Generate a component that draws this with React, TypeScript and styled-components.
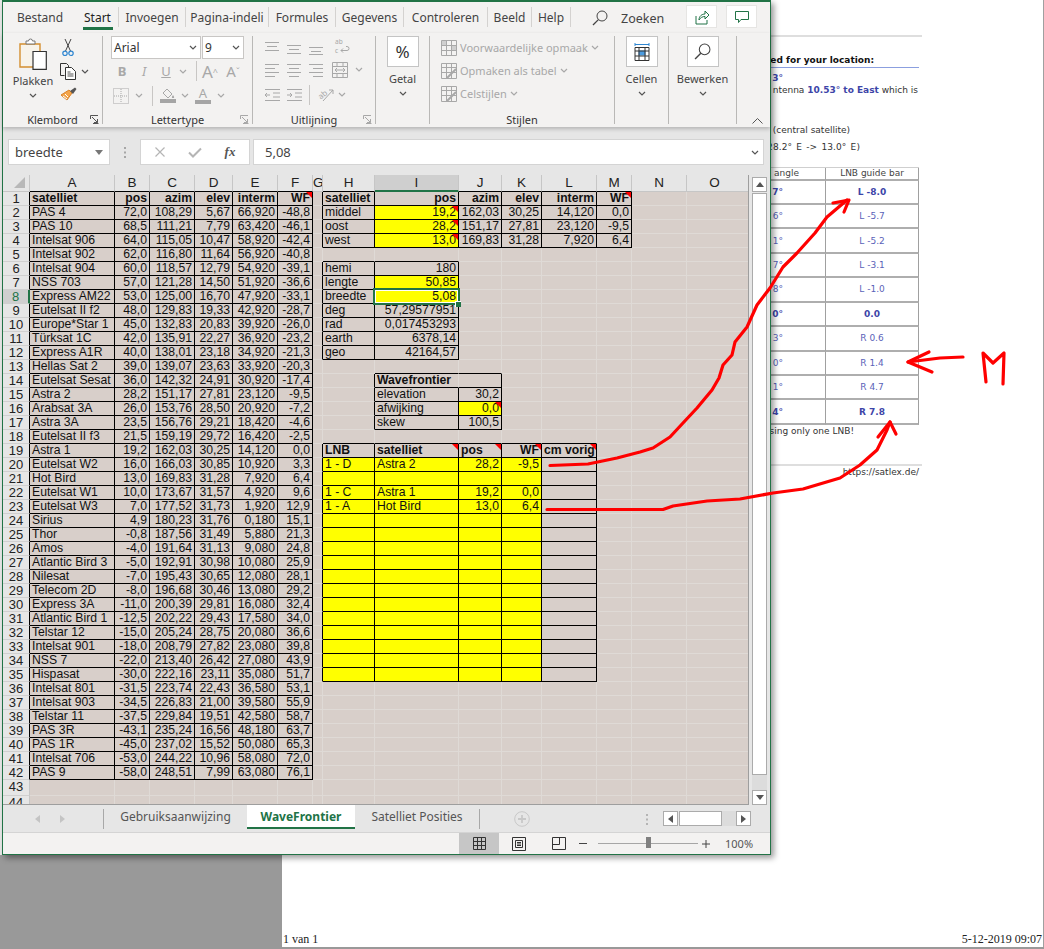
import React from "react";
import styled, { createGlobalStyle } from "styled-components";

const UI = `"Noto Sans", "Open Sans", sans-serif`;
const GREEN = "#217346";
const OFF = "#a8a8a8";
const INK = "#444444";

const Global = createGlobalStyle`
  html, body { margin: 0; padding: 0; width: 1044px; height: 949px; overflow: hidden; background: #999999; }
  * { box-sizing: border-box; }
`;

const Desktop = styled.div`
  position: relative;
  width: 1044px;
  height: 949px;
  overflow: hidden;
  padding-left: 282px;
  background: #999999;
`;

/* ---------- printed page behind the window ---------- */
const Page = styled.div`
  width: 762px;
  height: 947px;
  background: #ffffff;
  border-right: 1px solid #a0a0a0;
  display: flex;
  flex-direction: column;
  padding-top: 35px;
  font-family: "DejaVu Sans", sans-serif;
  font-size: 9px;
  color: #333333;
`;
const Doc = styled.div`
  width: 637px;
  display: flex;
  flex-direction: column;
`;
const Rule = styled.div<{ $top?: number }>`
  height: 2px;
  margin-top: ${(p) => p.$top ?? 0}px;
  margin-right: -3px;
  background: #dedede;
`;
const Line = styled.div<{ $top?: number; $end?: number }>`
  height: 12px;
  line-height: 12px;
  margin-top: ${(p) => p.$top ?? 0}px;
  padding-right: ${(p) => p.$end ?? 0}px;
  text-align: right;
  white-space: nowrap;
`;
const HeadLine = styled(Line)`
  height: 14px;
  font-weight: 700;
  color: #111111;
  border-bottom: 1px solid #8b9fdf;
`;
const WideLine = styled(Line)`
  word-spacing: 1.2px;
  letter-spacing: 0.1px;
`;
const Blue = styled.b`
  color: #3d45a8;
`;
const GuideTable = styled.div`
  margin-top: 14px;
  display: grid;
  grid-template-columns: 125px 93px;
  grid-template-rows: 12.5px repeat(10, 24.45px);
  margin-left: auto;
  border-top: 1px solid #cfcfcf;
`;
const GuideCell = styled.div<{ $bold?: boolean; $head?: boolean; $pad?: number }>`
  display: flex;
  align-items: center;
  justify-content: ${(p) => (p.$pad ? "flex-end" : "center")};
  padding-right: ${(p) => p.$pad ?? 0}px;
  border-bottom: 2px solid #aeaeae;
  border-right: 1px solid #a0a0a0;
  font-size: 9px;
  font-weight: ${(p) => (p.$bold ? 700 : 400)};
  color: ${(p) => (p.$head ? "#444444" : p.$bold ? "#3d45a8" : "#5a62b8")};
  white-space: nowrap;
`;
const PrintFoot = styled.div`
  margin-top: auto;
  display: flex;
  justify-content: space-between;
  height: 14px;
  line-height: 13px;
  padding: 0 1px;
  font-family: "Liberation Serif", serif;
  font-size: 12px;
  color: #222222;
`;

/* ---------- window ---------- */
const Win = styled.div`
  position: absolute;
  left: 2px;
  top: 0;
  width: 769px;
  height: 855px;
  display: flex;
  flex-direction: column;
  background: #e6e6e6;
  border: 1px solid ${GREEN};
  border-top-width: 2px;
  box-shadow: 3px 3px 6px rgba(0, 0, 0, 0.4), -2px 0 0 #e9e9e9;
  font-family: ${UI};
  z-index: 1;
`;
const TabRow = styled.div`
  height: 31px;
  flex: none;
  display: flex;
  align-items: flex-start;
  background: #f3f2f1;
  padding-top: 5px;
`;
const Tab = styled.div<{ $w: number; $on?: boolean; $bar?: boolean }>`
  position: relative;
  width: ${(p) => p.$w}px;
  height: 20px;
  flex: none;
  text-align: center;
  line-height: 21px;
  font-size: 12px;
  color: ${(p) => (p.$on ? "#222222" : INK)};
  border-right: ${(p) => (p.$bar ? "1px solid #d4d2d0" : "none")};
  white-space: nowrap;
`;
const TabMark = styled.span`
  position: absolute;
  left: 50%;
  top: 20px;
  width: 30px;
  margin-left: -15px;
  height: 3px;
  background: ${GREEN};
`;
const SearchBox = styled.div`
  display: flex;
  align-items: center;
  gap: 13px;
  margin-left: 21px;
  height: 22px;
  font-size: 12.5px;
  color: ${INK};
  width: 85px;
`;
const TitleBtn = styled.div`
  width: 31px;
  height: 23px;
  margin-left: 9px;
  margin-top: -2px;
  flex: none;
  background: #ffffff;
  border: 1px solid #e6e5e3;
  display: flex;
  align-items: center;
  justify-content: center;
`;

const Ribbon = styled.div`
  height: 94px;
  flex: none;
  position: relative;
  z-index: 2;
  display: flex;
  padding-top: 3px;
  background: #f3f2f1;
  box-shadow: 0 2px 4px rgba(0, 0, 0, 0.22);
`;
const Group = styled.div<{ $w: number }>`
  position: relative;
  width: ${(p) => p.$w}px;
  height: 88px;
  flex: none;
  border-right: 1px solid #b9b8b6;
  display: flex;
  flex-direction: column;
`;
const GroupBody = styled.div<{ $pad?: number }>`
  flex: 1;
  min-height: 0;
  padding-left: ${(p) => p.$pad ?? 0}px;
  display: flex;
`;
const GroupName = styled.div`
  height: 14px;
  margin-bottom: -3px;
  flex: none;
  line-height: 14px;
  text-align: center;
  font-size: 11px;
  color: #333333;
`;
const Launcher = styled.span`
  position: absolute;
  right: 3px;
  bottom: 0;
  line-height: 0;
`;
const BigCol = styled.div<{ $w?: number }>`
  width: ${(p) => (p.$w ? `${p.$w}px` : "100%")};
  flex: none;
  display: flex;
  flex-direction: column;
  align-items: center;
  font-size: 11px;
  color: ${INK};
  white-space: nowrap;
`;
const PasteArt = styled.div`
  height: 36px;
  padding-top: 2px;
  line-height: 0;
`;
const BigLabel = styled.div`
  height: 17px;
  line-height: 17px;
`;
const BigChev = styled.div`
  height: 12px;
  display: flex;
  align-items: center;
`;
const BigBtn = styled.div`
  width: 32px;
  height: 31px;
  margin-bottom: 3px;
  background: #ffffff;
  border: 1px solid #c4c4c4;
  display: flex;
  align-items: center;
  justify-content: center;
  font-size: 17px;
  color: #333333;
`;
const Stack = styled.div`
  display: flex;
  flex-direction: column;
`;
const ClipRow = styled.div`
  height: 23.5px;
  display: flex;
  align-items: center;
`;
const Slot = styled.span<{ $w: number }>`
  width: ${(p) => p.$w}px;
  flex: none;
  display: flex;
  align-items: center;
  justify-content: center;
  height: 100%;
  line-height: 0;
  svg {
    flex: none;
  }
`;
const ToolRow = styled.div<{ $h: number }>`
  height: ${(p) => p.$h}px;
  display: flex;
  align-items: center;
  flex: none;
`;
const Divider = styled.span<{ $l?: number; $r?: number }>`
  width: 1px;
  height: 20px;
  flex: none;
  margin-left: ${(p) => p.$l ?? 0}px;
  margin-right: ${(p) => p.$r ?? 0}px;
  background: #c8c6c4;
`;
const FontField = styled.div<{ $w: number }>`
  width: ${(p) => p.$w}px;
  height: 23px;
  margin-right: 1px;
  flex: none;
  background: #ffffff;
  border: 1px solid #c8c6c4;
  display: flex;
  align-items: center;
  justify-content: space-between;
  padding: 0 3px 0 2px;
  font-family: "Noto Sans", sans-serif;
  font-size: 12px;
  color: #333333;
`;
const Glyph = styled.span<{ $size?: number; $bold?: boolean; $italic?: boolean; $under?: boolean; $serif?: boolean }>`
  font-family: ${(p) => (p.$serif ? `"Liberation Serif", serif` : `"Noto Sans", sans-serif`)};
  font-size: ${(p) => p.$size ?? 13}px;
  line-height: 1;
  font-weight: ${(p) => (p.$bold ? 700 : 400)};
  font-style: ${(p) => (p.$italic ? "italic" : "normal")};
  text-decoration: ${(p) => (p.$under ? "underline" : "none")};
  color: ${OFF};
`;
const ColorA = styled.span`
  display: flex;
  flex-direction: column;
  align-items: center;
  line-height: 1;
  font-size: 13px;
  color: ${OFF};
`;
const ColorBar = styled.span`
  display: block;
  width: 16px;
  height: 4px;
  margin-top: 0;
  background: #a5a5a5;
`;
const StyleRow = styled.div`
  height: 23px;
  display: flex;
  align-items: center;
  gap: 3px;
  font-size: 11px;
  color: ${OFF};
  white-space: nowrap;
`;
const Collapse = styled.div`
  flex: 1;
  position: relative;
`;
const CollapseCaret = styled.span`
  position: absolute;
  right: 7px;
  bottom: 3px;
  line-height: 0;
`;

/* ---------- formula bar ---------- */
const FormulaBar = styled.div`
  height: 48px;
  flex: none;
  display: flex;
  align-items: flex-start;
  padding: 12px 0 0 5px;
  background: #e6e6e6;
`;
const NameBox = styled.div`
  width: 102px;
  height: 26px;
  flex: none;
  background: #ffffff;
  border: 1px solid #d4d4d4;
  display: flex;
  align-items: center;
  justify-content: space-between;
  padding: 0 6px 0 6px;
  font-size: 13px;
  color: ${INK};
`;
const Grip = styled.div`
  width: 30px;
  height: 26px;
  flex: none;
  display: flex;
  align-items: center;
  justify-content: center;
`;
const FxBox = styled.div`
  width: 110px;
  height: 26px;
  flex: none;
  background: #ffffff;
  border: 1px solid #d4d4d4;
  display: flex;
  align-items: center;
  justify-content: space-around;
  padding: 0 2px;
`;
const FxText = styled.span`
  font-family: "Liberation Serif", serif;
  font-style: italic;
  font-weight: 700;
  font-size: 13px;
  color: #555555;
`;
const ValueBox = styled.div`
  width: 511px;
  height: 26px;
  margin-left: 3px;
  flex: none;
  background: #ffffff;
  border: 1px solid #d4d4d4;
  display: flex;
  align-items: center;
  justify-content: space-between;
  padding: 0 4px 0 11px;
  font-size: 13px;
  color: ${INK};
`;

/* ---------- sheet ---------- */
const SheetWrap = styled.div`
  height: 630px;
  flex: none;
  display: flex;
`;
const Grid = styled.div`
  width: 746px;
  height: 630px;
  flex: none;
  overflow: hidden;
  display: grid;
  grid-template-columns: 27px 85px 35px 45px 38px 45px 35px 10px 52px 84px 43px 40px 55px 35px 55px 62px;
  grid-template-rows: 17px repeat(42, 14px) 16px 14px;
  background: #d8cfca;
  border-bottom: 1px solid #9e9e9e;
  border-right: 1px solid #9e9e9e;
  font-family: "Liberation Sans", Arial, sans-serif;
  font-size: 12.2px;
  color: #111111;
`;
const Corner = styled.div`
  background: #e6e6e6;
  border-right: 1px solid #c6c6c6;
  border-bottom: 1px solid #c6c6c6;
  display: flex;
  align-items: flex-end;
  justify-content: flex-end;
  padding: 0 4px 3px 0;
`;
const ColHead = styled.div<{ $on?: boolean; $dark?: boolean; $pad?: number }>`
  background: ${(p) => (p.$on ? "#cfcfcf" : "#e6e6e6")};
  border-right: 1px solid #c6c6c6;
  border-bottom: ${(p) => (p.$on ? `2px solid ${GREEN}` : p.$dark ? "1px solid #000" : "1px solid #c6c6c6")};
  font-size: 13.5px;
  line-height: 15px;
  text-align: center;
  padding-right: ${(p) => p.$pad ?? 0}px;
  color: #222222;
  overflow: hidden;
`;
const RowHead = styled.div<{ $on?: boolean; $dark?: boolean }>`
  background: ${(p) => (p.$on ? "#cfcfcf" : "#e6e6e6")};
  border-bottom: 1px solid ${(p) => (p.$on ? "#cfcfcf" : "#d0d0d0")};
  border-right: ${(p) => (p.$on ? `2px solid ${GREEN}` : p.$dark ? "1px solid #000" : "1px solid #c6c6c6")};
  font-size: 13px;
  line-height: 13px;
  text-align: center;
  color: ${(p) => (p.$on ? GREEN : "#222222")};
`;
const Cell = styled.div<{ $right?: boolean; $bold?: boolean; $fill?: boolean; $edgeR?: boolean; $edgeB?: boolean; $z?: boolean }>`
  position: relative;
  z-index: ${(p) => (p.$z ? 3 : "auto")};
  min-width: 0;
  background: ${(p) => (p.$fill ? "#ffff00" : "transparent")};
  border-right: 1px solid ${(p) => (p.$edgeR ? "#000000" : "#dfdad6")};
  border-bottom: 1px solid ${(p) => (p.$edgeB ? "#000000" : "#dfdad6")};
  padding: 0 2px;
  text-align: ${(p) => (p.$right ? "right" : "left")};
  font-weight: ${(p) => (p.$bold ? 700 : 400)};
  line-height: 13px;
  white-space: nowrap;
`;
const Note = styled.span`
  position: absolute;
  top: 0;
  right: 0;
  width: 0;
  height: 0;
  border-top: 6px solid #ff0000;
  border-left: 6px solid transparent;
`;
const Cursor = styled.span`
  position: absolute;
  left: -2px;
  top: -2px;
  right: -2px;
  bottom: -2px;
  border: 2px solid ${GREEN};
  box-shadow: inset 0 0 0 1px #ffffff;
  pointer-events: none;
`;
const Handle = styled.span`
  position: absolute;
  right: -3px;
  bottom: -4px;
  width: 6px;
  height: 6px;
  background: ${GREEN};
  border: 1px solid #ffffff;
  border-width: 1px 0 0 1px;
`;
const VScroll = styled.div`
  width: 21px;
  height: 630px;
  flex: none;
  display: flex;
  flex-direction: column;
  padding: 2px 2px 0 3px;
  background: #e6e6e6;
`;
const ArrowBtn = styled.div`
  width: 15px;
  height: 15px;
  flex: none;
  background: #ffffff;
  border: 1px solid #ababab;
  display: flex;
  align-items: center;
  justify-content: center;
  line-height: 0;
`;
const VThumb = styled.div`
  width: 15px;
  height: 582px;
  margin-top: 1px;
  flex: none;
  background: #ffffff;
  border: 1px solid #ababab;
`;
const VTrack = styled.div`
  width: 15px;
  flex: 1;
  background: #dcdcdc;
`;

/* ---------- sheet tabs ---------- */
const SheetBar = styled.div`
  height: 27px;
  flex: none;
  display: flex;
  align-items: flex-start;
  background: #e6e6e6;
  font-size: 12px;
  color: #555555;
`;
const NavArrows = styled.div`
  width: 100px;
  height: 20px;
  margin-top: 4px;
  flex: none;
  display: flex;
  align-items: center;
  justify-content: center;
  gap: 20px;
  padding-right: 6px;
`;
const BarSep = styled.span`
  width: 1px;
  height: 20px;
  margin-top: 4px;
  flex: none;
  background: #a8a8a8;
`;
const SheetTab = styled.div<{ $w: number; $on?: boolean }>`
  width: ${(p) => p.$w}px;
  height: 24px;
  flex: none;
  text-align: center;
  line-height: 23px;
  white-space: nowrap;
  font-weight: ${(p) => (p.$on ? 700 : 400)};
  color: ${(p) => (p.$on ? GREEN : "#555555")};
  background: ${(p) => (p.$on ? "#ffffff" : "transparent")};
  border-bottom: ${(p) => (p.$on ? `2px solid ${GREEN}` : "none")};
`;
const AddSheet = styled.div`
  width: 84px;
  height: 28px;
  flex: none;
  display: flex;
  align-items: center;
  justify-content: center;
`;
const Dots = styled.div`
  width: 39px;
  margin-left: 60px;
  height: 28px;
  flex: none;
  display: flex;
  align-items: center;
  justify-content: center;
  padding-left: 6px;
`;
const HScroll = styled.div`
  display: flex;
  flex: none;
  margin-top: 6px;
  margin-left: 0;
`;
const HThumb = styled.div`
  width: 43px;
  height: 15px;
  margin-left: 1px;
  background: #ffffff;
  border: 1px solid #ababab;
`;
const HTrack = styled.div`
  width: 14px;
  height: 15px;
  background: #dcdcdc;
`;

/* ---------- status bar ---------- */
const StatusBar = styled.div`
  height: 22px;
  flex: none;
  display: flex;
  align-items: center;
  justify-content: flex-end;
  background: #f3f2f1;
  border-top: 1px solid #d4d4d4;
  padding-right: 20px;
  font-size: 11px;
  color: #555555;
`;
const ViewBtn = styled.div<{ $on?: boolean }>`
  width: 40px;
  height: 21px;
  flex: none;
  display: flex;
  align-items: center;
  justify-content: center;
  background: ${(p) => (p.$on ? "#c6c6c6" : "transparent")};
`;
const ZoomTrack = styled.div`
  position: relative;
  width: 100px;
  height: 1px;
  margin: 0 4px 0 11px;
  flex: none;
  background: #a6a6a6;
`;
const ZoomKnob = styled.span`
  position: absolute;
  left: 48px;
  top: -6px;
  width: 5px;
  height: 11px;
  background: #808080;
`;
const ZoomPct = styled.span`
  width: 40px;
  margin-left: 15px;
  margin-right: -15px;
  flex: none;
`;
const Ink = styled.svg`
  position: absolute;
  left: 0;
  top: 0;
  z-index: 5;
  pointer-events: none;
`;

/* ---------- little drawings ---------- */
const Chev = ({ off }: { off?: boolean }) => (
  <svg width="8" height="5" viewBox="0 0 8 5">
    <path d="M1 1l3 3 3-3" fill="none" stroke={off ? OFF : "#555"} strokeWidth="1.2" />
  </svg>
);
const Launch = ({ off }: { off?: boolean }) => (
  <svg width="9" height="9" viewBox="0 0 9 9">
    <path d="M.5 4V.5H8M8.5 8.5H3M2 2l5.5 5.5M7.5 4v3.5H4" fill="none" stroke={off ? OFF : "#555"} strokeWidth="1" />
  </svg>
);
const Bars = ({ rows, w = 16 }: { rows: number[][]; w?: number }) => (
  <svg width={w} height="16" viewBox={`0 0 ${w} 16`}>
    {rows.map(([a, b, y], i) => (
      <path key={i} d={`M${a} ${y + 0.5}H${b}`} stroke={OFF} strokeWidth="1" />
    ))}
  </svg>
);
const Paste = () => (
  <svg width="28" height="33" viewBox="0 0 28 33">
    <path d="M1 6h20v23H1z" fill="#f7f3ea" stroke="#d48f2f" strokeWidth="1.4" />
    <path d="M7 5V3h2.5a2 2 0 0 1 4 0H16v3H7z" fill="#fff" stroke="#777" />
    <path d="M14 13.5h13.3v17.8H14z" fill="#fff" stroke="#333" strokeWidth="1.2" />
  </svg>
);
const Scissors = () => (
  <svg width="12" height="18" viewBox="0 0 12 18">
    <path d="M3 0l5.5 12M9 0L3.5 12" stroke="#444" strokeWidth="1" fill="none" />
    <circle cx="3" cy="14.3" r="2.2" fill="none" stroke="#2e86d1" strokeWidth="1.2" />
    <circle cx="9" cy="14.3" r="2.2" fill="none" stroke="#2e86d1" strokeWidth="1.2" />
  </svg>
);
const Copy = () => (
  <svg width="17" height="17" viewBox="0 0 17 17">
    <path d="M.5.5h6l2 2v3M.5.5v12h4" fill="none" stroke="#333" />
    <path d="M5.5 4.5h6l4 4v8h-10z" fill="#fff" stroke="#333" />
    <path d="M7.5 9h3M7.5 11h6M7.5 13h6" stroke="#555" />
  </svg>
);
const Brush = () => (
  <svg width="17" height="15" viewBox="0 0 17 15">
    <path d="M9 3l3 3-5 7-6-5z" fill="#f3a44a" stroke="#d9822b" />
    <path d="M10 4l5-3.5 1.5 1.5-3.5 5z" fill="#555" />
    <path d="M3 9l4 3M5 7l3 3" stroke="#fff" />
  </svg>
);
const CellBorders = () => (
  <svg width="16" height="16" viewBox="0 0 16 16">
    <path d="M.5.5h15v15H.5z" fill="none" stroke={OFF} strokeDasharray="1 1" />
    <path d="M8 1v14M1 8h14" stroke={OFF} strokeDasharray="1 1" />
  </svg>
);
const Bucket = () => (
  <svg width="16" height="11" viewBox="0 0 16 11">
    <path d="M7 1l5 5-4 4-5-5z" fill="none" stroke={OFF} />
    <path d="M13 7c1 1.5 1.5 2 1 3h-2c-.4-1 .3-1.8 1-3z" fill={OFF} />
  </svg>
);
const Wrap = () => (
  <svg width="16" height="17" viewBox="0 0 16 17" overflow="visible">
    <text fontSize="6.5" fill={OFF} fontFamily="Noto Sans">
      <tspan x="1" y="5.5">ab</tspan>
      <tspan x="1" y="14.5">c</tspan>
    </text>
    <path d="M7 12.5h6a2 2 0 0 0 0-4h-1M7 12.5l2-2M7 12.5l2 2" fill="none" stroke={OFF} />
  </svg>
);
const Merge = () => (
  <svg width="16" height="16" viewBox="0 0 16 16">
    <path d="M.5.5h15v15H.5zM.5 4.5h15M.5 11.5h15M5 1v3M11 1v3M5 12v3M11 12v3" fill="none" stroke={OFF} />
    <path d="M3 8h10M3 8l2-2M3 8l2 2M13 8l-2-2M13 8l-2 2" fill="none" stroke={OFF} />
  </svg>
);
const Indent = ({ flip }: { flip?: boolean }) => (
  <svg width="15" height="14" viewBox="0 0 15 14">
    <path d="M0 1.5h15M0 12.5h15M8 5h7M8 9h7" stroke={OFF} />
    <path d={flip ? "M5 7H0M5 7L3 5M5 7L3 9" : "M0 7h5M0 7l2-2M0 7l2 2"} fill="none" stroke={OFF} />
  </svg>
);
const Orient = () => (
  <svg width="18" height="17" viewBox="0 0 18 17" overflow="visible">
    <text x="1" y="12" fontSize="8" fill={OFF} fontFamily="Noto Sans" transform="rotate(-40 5 9)">ab</text>
    <path d="M6 15L16 4M16 4h-4M16 4v4" fill="none" stroke={OFF} />
  </svg>
);
const Percent = () => <span>%</span>;
const Cells = () => (
  <svg width="16" height="19" viewBox="0 0 16 19">
    <path d="M1 1v3M15 1v3M1 2.5h14" stroke="#2e86d1" fill="none" />
    <path d="M1 5.5h14v13H1z" fill="none" stroke="#333" />
    <path d="M4.5 8.5h7v5h-7z" fill="#4a9be0" />
    <path d="M1 9h14M1 14h14M5 6v12M11 6v12" stroke="#333" />
  </svg>
);
const Lens = ({ s = 16, c = "#444" }: { s?: number; c?: string }) => (
  <svg width={s} height={s} viewBox="0 0 16 16">
    <circle cx="10" cy="6" r="5" fill="none" stroke={c} />
    <path d="M6.4 9.6L1 15" stroke={c} strokeWidth="1.3" />
  </svg>
);
const CondFmt = () => (
  <svg width="16" height="16" viewBox="0 0 16 16">
    <path d="M.5.5h15v15H.5zM.5 5.5h15M.5 10.5h15M5.5 1v14M10.5 1v14" fill="none" stroke={OFF} />
    <path d="M1 1h4v4H1zM11 6h4v4h-4z" fill="#cfcfcf" />
  </svg>
);
const TableFmt = () => (
  <svg width="16" height="16" viewBox="0 0 16 16">
    <path d="M.5.5h15v15H.5zM.5 4.5h15M.5 9.5h15M5.5 1v14M10.5 1v14" fill="none" stroke={OFF} />
    <path d="M6 15l9-9" stroke={OFF} strokeWidth="2" />
  </svg>
);
const Share = () => (
  <svg width="16" height="16" viewBox="0 0 16 16">
    <path d="M2 7v8h11v-4" fill="none" stroke={GREEN} />
    <path d="M5 11c0-4 3-6 6-6V2l4 4-4 4V7.500c-2.500 0-4.500 1-6 3.500z" fill="none" stroke={GREEN} />
  </svg>
);
const Comment = () => (
  <svg width="14" height="14" viewBox="0 0 14 14">
    <path d="M.5 1.500h13v8H6l-2.500 3V9.500h-3z" fill="none" stroke={GREEN} />
  </svg>
);
const X = () => (
  <svg width="10" height="10" viewBox="0 0 10 10">
    <path d="M.5.5l9 9M9.500.5l-9 9" stroke="#b5b5b5" strokeWidth="1.200" />
  </svg>
);
const Check = () => (
  <svg width="14" height="11" viewBox="0 0 14 11">
    <path d="M1 5.500l4 4 8-8" fill="none" stroke="#b5b5b5" strokeWidth="2" />
  </svg>
);
const GripDots = ({ c = "#a6a6a6" }: { c?: string }) => (
  <svg width="2" height="11" viewBox="0 0 2 11">
    <path d="M0 0h2v2H0zM0 4.500h2v2H0zM0 9h2v2H0z" fill={c} />
  </svg>
);
const Tri = ({ dir, c = "#555" }: { dir: "u" | "d" | "l" | "r"; c?: string }) => {
  const d = { u: "M0 5L4 0l4 5z", d: "M0 0l4 5 4-5z", l: "M5 0v8L0 4z", r: "M0 0v8l5-4z" }[dir];
  const v = dir === "u" || dir === "d";
  return (
    <svg width={v ? 8 : 5} height={v ? 5 : 8} viewBox={v ? "0 0 8 5" : "0 0 5 8"}>
      <path d={d} fill={c} />
    </svg>
  );
};
const Normal = () => (
  <svg width="13" height="13" viewBox="0 0 13 13">
    <path d="M.5.5h12v12H.5zM.5 4.500h12M.5 8.500h12M4.500 1v12M8.500 1v12" fill="none" stroke="#333" />
  </svg>
);
const Layout = () => (
  <svg width="14" height="14" viewBox="0 0 14 14">
    <path d="M.5.5h13v13H.5zM3.500 3.500h7v7h-7zM5 5.500h4M5 7h4M5 8.500h4" fill="none" stroke="#333" />
  </svg>
);
const Breaks = () => (
  <svg width="14" height="13" viewBox="0 0 14 13">
    <path d="M.5.5h13v12H.5zM.5 7.500h7M7.500 1v6.500" fill="none" stroke="#333" />
  </svg>
);

/* ---------- sheet data ---------- */
const COLS = ["", "A", "B", "C", "D", "E", "F", "G", "H", "I", "J", "K", "L", "M", "N", "O"];
const SATS = `PAS 4|72,0|108,29|5,67|66,920|-48,8
PAS 10|68,5|111,21|7,79|63,420|-46,1
Intelsat 906|64,0|115,05|10,47|58,920|-42,4
Intelsat 902|62,0|116,80|11,64|56,920|-40,8
Intelsat 904|60,0|118,57|12,79|54,920|-39,1
NSS 703|57,0|121,28|14,50|51,920|-36,6
Express AM22|53,0|125,00|16,70|47,920|-33,1
Eutelsat II f2|48,0|129,83|19,33|42,920|-28,7
Europe*Star 1|45,0|132,83|20,83|39,920|-26,0
Türksat 1C|42,0|135,91|22,27|36,920|-23,2
Express A1R|40,0|138,01|23,18|34,920|-21,3
Hellas Sat 2|39,0|139,07|23,63|33,920|-20,3
Eutelsat Sesat|36,0|142,32|24,91|30,920|-17,4
Astra 2|28,2|151,17|27,81|23,120|-9,5
Arabsat 3A|26,0|153,76|28,50|20,920|-7,2
Astra 3A|23,5|156,76|29,21|18,420|-4,6
Eutelsat II f3|21,5|159,19|29,72|16,420|-2,5
Astra 1|19,2|162,03|30,25|14,120|0,0
Eutelsat W2|16,0|166,03|30,85|10,920|3,3
Hot Bird|13,0|169,83|31,28|7,920|6,4
Eutelsat W1|10,0|173,67|31,57|4,920|9,6
Eutelsat W3|7,0|177,52|31,73|1,920|12,9
Sirius|4,9|180,23|31,76|0,180|15,1
Thor|-0,8|187,56|31,49|5,880|21,3
Amos|-4,0|191,64|31,13|9,080|24,8
Atlantic Bird 3|-5,0|192,91|30,98|10,080|25,9
Nilesat|-7,0|195,43|30,65|12,080|28,1
Telecom 2D|-8,0|196,68|30,46|13,080|29,2
Express 3A|-11,0|200,39|29,81|16,080|32,4
Atlantic Bird 1|-12,5|202,22|29,43|17,580|34,0
Telstar 12|-15,0|205,24|28,75|20,080|36,6
Intelsat 901|-18,0|208,79|27,82|23,080|39,8
NSS 7|-22,0|213,40|26,42|27,080|43,9
Hispasat|-30,0|222,16|23,11|35,080|51,7
Intelsat 801|-31,5|223,74|22,43|36,580|53,1
Intelsat 903|-34,5|226,83|21,00|39,580|55,9
Telstar 11|-37,5|229,84|19,51|42,580|58,7
PAS 3R|-43,1|235,24|16,56|48,180|63,7
PAS 1R|-45,0|237,02|15,52|50,080|65,3
Intelsat 706|-53,0|244,22|10,96|58,080|72,0
PAS 9|-58,0|248,51|7,99|63,080|76,1`
  .split("\n")
  .map((l) => l.split("|"));

type Spec = { t?: string; bold?: boolean; left?: boolean; yellow?: boolean; note?: boolean; open?: boolean };
const spec = new Map<string, Spec>();
const key = (r: number, c: number) => `${r}:${c}`;
const put = (r: number, c: number, s: Spec) => spec.set(key(r, c), s);

["satelliet", "pos", "azim", "elev", "interm", "WF"].forEach((t, i) =>
  put(1, i + 1, { t, bold: true, left: i === 0, note: i === 5 })
);
SATS.forEach((row, r) => row.forEach((t, i) => put(r + 2, i + 1, { t, left: i === 0 })));

["satelliet", "pos", "azim", "elev", "interm", "WF"].forEach((t, i) =>
  put(1, i + 8, { t, bold: true, left: i === 0, note: i === 5 })
);
[
  ["middel", "19,2", "162,03", "30,25", "14,120", "0,0"],
  ["oost", "28,2", "151,17", "27,81", "23,120", "-9,5"],
  ["west", "13,0", "169,83", "31,28", "7,920", "6,4"],
].forEach((row, r) =>
  row.forEach((t, i) => put(r + 2, i + 8, { t, left: i === 0, yellow: i === 1, note: i === 1 }))
);
[
  ["hemi", "180"],
  ["lengte", "50,85"],
  ["breedte", "5,08"],
  ["deg", "57,29577951"],
  ["rad", "0,017453293"],
  ["earth", "6378,14"],
  ["geo", "42164,57"],
].forEach(([a, b], r) => {
  put(r + 6, 8, { t: a, left: true });
  put(r + 6, 9, { t: b, yellow: r === 1 || r === 2 });
});
put(14, 9, { t: "Wavefrontier", bold: true, left: true, open: true });
put(14, 10, {});
[
  ["elevation", "30,2"],
  ["afwijking", "0,0"],
  ["skew", "100,5"],
].forEach(([a, b], r) => {
  put(r + 15, 9, { t: a, left: true });
  put(r + 15, 10, { t: b, yellow: r === 1, note: r === 1 });
});
[
  { t: "LNB", bold: true, left: true },
  { t: "satelliet", bold: true, left: true, note: true },
  { t: "pos", bold: true, left: true, note: true },
  { t: "WF", bold: true, note: true },
  { t: "cm vorig", bold: true, left: true, note: true },
].forEach((s, i) => put(19, i + 8, s));
for (let r = 20; r <= 35; r++) {
  for (let c = 8; c <= 11; c++) put(r, c, { yellow: true, left: c < 10 });
  put(r, 12, {});
}
const fillRow = (r: number, v: string[]) =>
  v.forEach((t, i) => put(r, i + 8, { t, yellow: true, left: i < 2 }));
fillRow(20, ["1 - D", "Astra 2", "28,2", "-9,5"]);
fillRow(22, ["1 - C", "Astra 1", "19,2", "0,0"]);
fillRow(23, ["1 - A", "Hot Bird", "13,0", "6,4"]);

const boxed = (r: number, c: number) => spec.has(key(r, c));

const SheetGrid = () => {
  const out: React.ReactNode[] = [];
  for (let r = 0; r <= 44; r++) {
    for (let c = 0; c <= 15; c++) {
      const k = key(r, c);
      if (r === 0 && c === 0) {
        out.push(
          <Corner key={k}>
            <svg width="11" height="11" viewBox="0 0 11 11">
              <path d="M11 0v11H0z" fill="#b8b8b8" />
            </svg>
          </Corner>
        );
      } else if (r === 0) {
        out.push(
          <ColHead key={k} $on={c === 9} $dark={boxed(1, c)} $pad={c === 15 ? 6 : 0}>
            {COLS[c]}
          </ColHead>
        );
      } else if (c === 0) {
        out.push(
          <RowHead key={k} $on={r === 8} $dark={boxed(r, 1)}>
            {r}
          </RowHead>
        );
      } else {
        const s = spec.get(k);
        const sel = r === 8 && c === 9;
        const edgeR = !s?.open && (boxed(r, c) || boxed(r, c + 1));
        const edgeB = boxed(r, c) || boxed(r + 1, c);
        out.push(
          <Cell key={k} $right={!s?.left} $bold={s?.bold} $fill={s?.yellow} $edgeR={edgeR} $edgeB={edgeB} $z={sel}>
            {s?.t}
            {s?.note && <Note />}
            {sel && (
              <Cursor>
                <Handle />
              </Cursor>
            )}
          </Cell>
        );
      }
    }
  }
  return <Grid>{out}</Grid>;
};

const TABS: [string, number, boolean][] = [
  ["Bestand", 74, false],
  ["Start", 42, true],
  ["Invoegen", 67, true],
  ["Pagina-indeli", 83, true],
  ["Formules", 67, true],
  ["Gegevens", 68, true],
  ["Controleren", 84, true],
  ["Beeld", 44, true],
  ["Help", 39, true],
];

const GUIDE: [string, string, boolean][] = [
  ["7°", "L -8.0", true],
  ["6°", "L -5.7", false],
  ["1°", "L -5.2", false],
  ["7°", "L -3.1", false],
  ["8°", "L -1.0", false],
  ["0°", "0.0", true],
  ["3°", "R 0.6", false],
  ["0°", "R 1.4", false],
  ["1°", "R 4.7", false],
  ["4°", "R 7.8", true],
];

export default function App() {
  return (
    <>
      <Global />
      <Desktop>
        <Page>
          <Doc>
            <Rule />
            <HeadLine $top={17} $end={45}>ted for your location:</HeadLine>
            <Line $top={4} $end={136}><Blue>3°</Blue></Line>
            <Line $end={1}>ntenna <Blue>10.53° to East</Blue> which is</Line>
            <Line $top={28} $end={69}>(central satellite)</Line>
            <WideLine $top={5} $end={59}>28.2° E -&gt; 13.0° E)</WideLine>
            <GuideTable>
              <GuideCell $head $pad={26}>angle</GuideCell>
              <GuideCell $head>LNB guide bar</GuideCell>
              {GUIDE.map(([a, b, bold]) => (
                <React.Fragment key={b}>
                  <GuideCell $bold={bold} $pad={42}>{a}</GuideCell>
                  <GuideCell $bold={bold}>{b}</GuideCell>
                </React.Fragment>
              ))}
            </GuideTable>
            <Line $end={65}>sing only one LNB!</Line>
            <Rule $top={27} />
            <Line $end={-2}>https://satlex.de/</Line>
          </Doc>
          <PrintFoot>
            <span>1 van 1</span>
            <span>5-12-2019 09:07</span>
          </PrintFoot>
        </Page>

        <Win>
          <TabRow>
            {TABS.map(([t, w, bar]) => (
              <Tab key={t} $w={w} $on={t === "Start"} $bar={bar}>
                {t}
                {t === "Start" && <TabMark />}
              </Tab>
            ))}
            <SearchBox>
              <Lens />
              <span>Zoeken</span>
            </SearchBox>
            <TitleBtn><Share /></TitleBtn>
            <TitleBtn><Comment /></TitleBtn>
          </TabRow>

          <Ribbon>
            <Group $w={100}>
              <GroupBody>
                <BigCol $w={60}>
                  <PasteArt><Paste /></PasteArt>
                  <BigLabel>Plakken</BigLabel>
                  <BigChev><Chev /></BigChev>
                </BigCol>
                <Stack>
                  <ClipRow><Slot $w={10}><Scissors /></Slot></ClipRow>
                  <ClipRow>
                    <Slot $w={10}><Copy /></Slot>
                    <Slot $w={24}><Chev /></Slot>
                  </ClipRow>
                  <ClipRow><Slot $w={10}><Brush /></Slot></ClipRow>
                </Stack>
              </GroupBody>
              <GroupName>Klembord</GroupName>
              <Launcher><Launch /></Launcher>
            </Group>

            <Group $w={150}>
              <GroupBody $pad={8}>
                <Stack>
                  <ToolRow $h={23}>
                    <FontField $w={90}>Arial<Chev /></FontField>
                    <FontField $w={42}>9<Chev /></FontField>
                  </ToolRow>
                  <ToolRow $h={24}>
                    <Slot $w={22}><Glyph $bold>B</Glyph></Slot>
                    <Slot $w={22}><Glyph $italic>I</Glyph></Slot>
                    <Slot $w={22}><Glyph $under>U</Glyph></Slot>
                    <Slot $w={12}><Chev off /></Slot>
                    <Divider $l={7} $r={1} />
                    <Slot $w={24}><Glyph $size={17}>A</Glyph><Glyph $size={9}>^</Glyph></Slot>
                    <Slot $w={22}><Glyph $size={15}>A</Glyph><Glyph $size={9}>ˇ</Glyph></Slot>
                  </ToolRow>
                  <ToolRow $h={25}>
                    <Slot $w={20}><CellBorders /></Slot>
                    <Slot $w={16}><Chev off /></Slot>
                    <Divider $l={5} $r={5} />
                    <Slot $w={20}>
                      <ColorA><Bucket /><ColorBar /></ColorA>
                    </Slot>
                    <Slot $w={14}><Chev off /></Slot>
                    <Slot $w={22}>
                      <ColorA>A<ColorBar /></ColorA>
                    </Slot>
                    <Slot $w={14}><Chev off /></Slot>
                  </ToolRow>
                </Stack>
              </GroupBody>
              <GroupName>Lettertype</GroupName>
              <Launcher><Launch off /></Launcher>
            </Group>

            <Group $w={123}>
              <GroupBody $pad={8}>
                <Stack>
                  <ToolRow $h={21}>
                    <Slot $w={22}><Bars rows={[[1, 15, 3], [3, 13, 7], [1, 15, 11]]} /></Slot>
                    <Slot $w={22}><Bars rows={[[1, 15, 6], [3, 13, 10], [1, 15, 14]]} /></Slot>
                    <Slot $w={22}><Bars rows={[[1, 15, 8], [3, 13, 12], [1, 15, 15]]} /></Slot>
                    <Slot $w={29}><Wrap /></Slot>
                  </ToolRow>
                  <ToolRow $h={25}>
                    <Slot $w={22}><Bars rows={[[1, 15, 2], [1, 11, 6], [1, 15, 10], [1, 11, 14]]} /></Slot>
                    <Slot $w={22}><Bars rows={[[1, 15, 2], [3, 13, 6], [1, 15, 10], [3, 13, 14]]} /></Slot>
                    <Slot $w={22}><Bars rows={[[1, 15, 2], [5, 15, 6], [1, 15, 10], [5, 15, 14]]} /></Slot>
                    <Slot $w={26}><Merge /></Slot>
                    <Slot $w={12}><Chev off /></Slot>
                  </ToolRow>
                  <ToolRow $h={25}>
                    <Slot $w={22}><Indent /></Slot>
                    <Slot $w={22}><Indent flip /></Slot>
                    <Divider $l={4} $r={6} />
                    <Slot $w={20}><Orient /></Slot>
                    <Slot $w={12}><Chev off /></Slot>
                  </ToolRow>
                </Stack>
              </GroupBody>
              <GroupName>Uitlijning</GroupName>
              <Launcher><Launch off /></Launcher>
            </Group>

            <Group $w={54}>
              <GroupBody>
                <BigCol>
                  <BigBtn><Percent /></BigBtn>
                  <BigLabel>Getal</BigLabel>
                  <BigChev><Chev /></BigChev>
                </BigCol>
              </GroupBody>
            </Group>

            <Group $w={185}>
              <GroupBody $pad={11}>
                <Stack>
                  <StyleRow><CondFmt />Voorwaardelijke opmaak <Chev off /></StyleRow>
                  <StyleRow><TableFmt />Opmaken als tabel <Chev off /></StyleRow>
                  <StyleRow><TableFmt />Celstijlen <Chev off /></StyleRow>
                </Stack>
              </GroupBody>
              <GroupName>Stijlen</GroupName>
            </Group>

            <Group $w={54}>
              <GroupBody>
                <BigCol>
                  <BigBtn><Cells /></BigBtn>
                  <BigLabel>Cellen</BigLabel>
                  <BigChev><Chev /></BigChev>
                </BigCol>
              </GroupBody>
            </Group>

            <Group $w={68}>
              <GroupBody>
                <BigCol>
                  <BigBtn><Lens s={17} /></BigBtn>
                  <BigLabel>Bewerken</BigLabel>
                  <BigChev><Chev /></BigChev>
                </BigCol>
              </GroupBody>
            </Group>

            <Collapse>
              <CollapseCaret>
                <svg width="11" height="6" viewBox="0 0 11 6">
                  <path d="M.5 5.500l5-5 5 5" fill="none" stroke="#555" />
                </svg>
              </CollapseCaret>
            </Collapse>
          </Ribbon>

          <FormulaBar>
            <NameBox>breedte<Tri dir="d" c="#777" /></NameBox>
            <Grip><GripDots /></Grip>
            <FxBox><X /><Check /><FxText>fx</FxText></FxBox>
            <ValueBox>5,08<Chev /></ValueBox>
          </FormulaBar>

          <SheetWrap>
            <SheetGrid />
            <VScroll>
              <ArrowBtn><Tri dir="u" /></ArrowBtn>
              <VThumb />
              <VTrack />
              <ArrowBtn><Tri dir="d" /></ArrowBtn>
            </VScroll>
          </SheetWrap>

          <SheetBar>
            <NavArrows><Tri dir="l" c="#c4c4c4" /><Tri dir="r" c="#c4c4c4" /></NavArrows>
            <BarSep />
            <SheetTab $w={143}>Gebruiksaanwijzing</SheetTab>
            <SheetTab $w={108} $on>WaveFrontier</SheetTab>
            <SheetTab $w={124}>Satelliet Posities</SheetTab>
            <BarSep />
            <AddSheet>
              <svg width="16" height="16" viewBox="0 0 16 16">
                <circle cx="8" cy="8" r="7.300" fill="none" stroke="#c8c8c8" />
                <path d="M8 4v8M4 8h8" stroke="#c8c8c8" strokeWidth="1.800" />
              </svg>
            </AddSheet>
            <Dots><GripDots c="#b4b4b4" /></Dots>
            <HScroll>
              <ArrowBtn><Tri dir="l" /></ArrowBtn>
              <HThumb />
              <HTrack />
              <ArrowBtn><Tri dir="r" /></ArrowBtn>
            </HScroll>
          </SheetBar>

          <StatusBar>
            <ViewBtn $on><Normal /></ViewBtn>
            <ViewBtn><Layout /></ViewBtn>
            <ViewBtn><Breaks /></ViewBtn>
            <svg width="8" height="1" viewBox="0 0 8 1"><path d="M0 .5h8" stroke="#444" /></svg>
            <ZoomTrack><ZoomKnob /></ZoomTrack>
            <svg width="8" height="8" viewBox="0 0 8 8"><path d="M0 4h8M4 0v8" stroke="#444" /></svg>
            <ZoomPct>100%</ZoomPct>
          </StatusBar>
        </Win>

        <Ink width="1044" height="949" viewBox="0 0 1044 949" fill="none" stroke="#ff0000" strokeWidth="3.2" strokeLinecap="round" strokeLinejoin="round">
          <path d="M550 465.500L588 464L617 458L640 452L653 448L670 437L683 423L697 408L712 390L719 378L723 365L732 355L735 342L747 327L757 305L770 288L783 267L797 253L815 233L827 217L847 200" />
          <path d="M833 203L849 200L844 212" />
          <path d="M547 509.500H663L673 506L707 501L740 499L773 493L803 489L840 478L860 465L877 450L887 430L890 422" />
          <path d="M878 437L890 422L896 434" />
          <path d="M963 357L940 358L908 362" />
          <path d="M929 352L908 362L932 372" />
          <path d="M986 382L983 353L993 363L1004 353L1003 384" />
        </Ink>
      </Desktop>
    </>
  );
}
